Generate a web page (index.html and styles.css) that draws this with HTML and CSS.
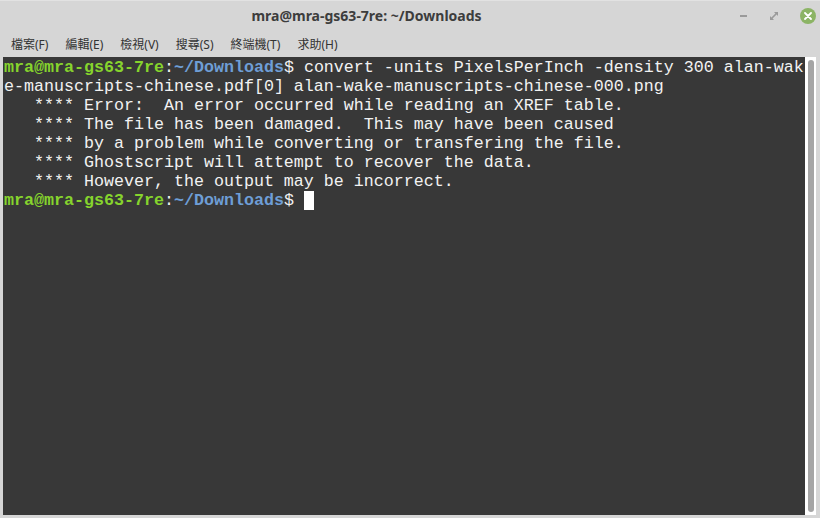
FILE: index.html
```html
<!DOCTYPE html>
<html>
<head>
<meta charset="utf-8">
<link rel="stylesheet" href="styles.css">
</head>
<body>
<div class="window">
  <div class="titlebar">
    <div class="title">mra@mra-gs63-7re: ~/Downloads</div>
    <div class="controls">
      <span class="btn-min"></span>
      <svg class="btn-max" width="8" height="8" viewBox="0 0 8 8"><path d="M4 0h4v4l-1.4-1.4L2.6 6.6 4 8H0V4l1.4 1.4 4-4z" fill="#9a9a9a"/></svg>
      <span class="btn-close"><svg width="8" height="8" viewBox="0 0 8 8"><path d="M1 1l6 6M7 1L1 7" stroke="#fff" stroke-width="1.8" stroke-linecap="round"/></svg></span>
    </div>
  </div>
  <div class="menubar">
    <span class="menu-item">檔案(F)</span>
    <span class="menu-item">編輯(E)</span>
    <span class="menu-item">檢視(V)</span>
    <span class="menu-item">搜尋(S)</span>
    <span class="menu-item">終端機(T)</span>
    <span class="menu-item">求助(H)</span>
  </div>
  <div class="content">
    <div class="terminal"><div class="line"><span class="user">mra@mra-gs63-7re</span>:<span class="path">~/Downloads</span>$ convert -units PixelsPerInch -density 300 alan-wak</div><div class="line">e-manuscripts-chinese.pdf[0] alan-wake-manuscripts-chinese-000.png</div><div class="line">   **** Error:  An error occurred while reading an XREF table.</div><div class="line">   **** The file has been damaged.  This may have been caused</div><div class="line">   **** by a problem while converting or transfering the file.</div><div class="line">   **** Ghostscript will attempt to recover the data.</div><div class="line">   **** However, the output may be incorrect.</div><div class="line"><span class="user">mra@mra-gs63-7re</span>:<span class="path">~/Downloads</span>$ <span class="cursor"> </span></div></div>
    <div class="scrollbar"><div class="thumb"></div></div>
  </div>
</div>
</body>
</html>
```
FILE: styles.css
```css
html, body {
  margin: 0;
  padding: 0;
  background: #d6d6d6;
  width: 820px;
  height: 518px;
  overflow: hidden;
}
.window {
  display: flex;
  flex-direction: column;
  height: 518px;
  border-top: 1px solid #e2e2e2;
  box-sizing: border-box;
}
.titlebar {
  height: 29px;
  display: flex;
  align-items: center;
}
.title {
  flex: 1;
  text-align: center;
  font-family: "Noto Sans", sans-serif;
  font-weight: bold;
  font-size: 14px;
  color: #3d3d3d;
}
.controls {
  width: 87px;
  display: flex;
  align-items: center;
  height: 29px;
}
.btn-min {
  display: block;
  width: 7px;
  height: 2px;
  background: #9a9a9a;
  margin-left: 7px;
}
.btn-max {
  display: block;
  margin-left: 23px;
}
.btn-close {
  display: flex;
  align-items: center;
  justify-content: center;
  width: 16px;
  height: 16px;
  border-radius: 50%;
  background: #8cb465;
  margin-left: 22px;
}
.menubar {
  height: 27px;
  display: flex;
  align-items: center;
  padding-left: 3px;
  font-family: "Noto Sans", "Noto Sans CJK TC", sans-serif;
  font-size: 12px;
  color: #333;
}
.menu-item {
  padding: 0 8px 0 8px;
  margin-right: 1px;
}
.content {
  display: flex;
  height: 458px;
  padding-left: 3px;
  padding-right: 4px;
}
.terminal {
  flex: 1;
  background: #383838;
  color: #f2f2f2;
  font-family: "Liberation Mono", monospace;
  font-size: 16.67px;
  line-height: 19px;
  padding: 1px 0 0 1px;
  white-space: pre;
  overflow: hidden;
}
.user {
  color: #86d42d;
  font-weight: bold;
}
.path {
  color: #6e9ed6;
  font-weight: bold;
}
.cursor {
  display: inline-block;
  width: 10px;
  height: 19px;
  background: #ffffff;
  vertical-align: top;
}
.scrollbar {
  width: 11px;
  background: #ffffff;
  display: flex;
  justify-content: center;
  padding: 3px 0 3px 0;
  box-sizing: border-box;
}
.thumb {
  width: 6px;
  background: #a5a5a5;
  border-radius: 3px;
  height: 452px;
}
```
